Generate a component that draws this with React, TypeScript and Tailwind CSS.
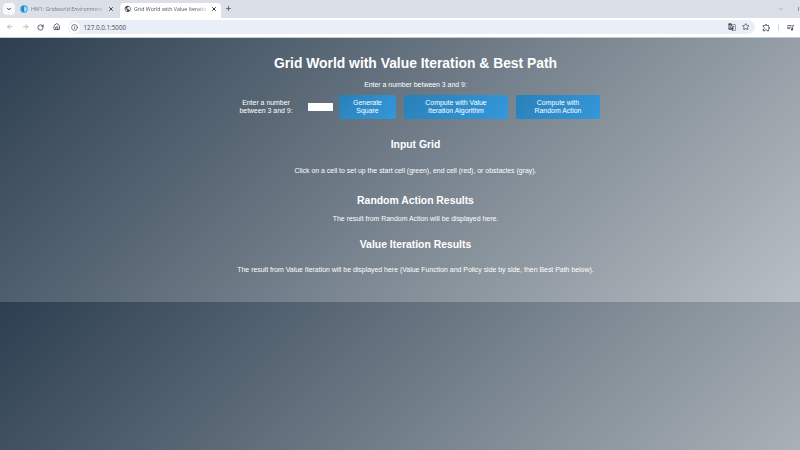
import React from "react";
import { ArrowLeft, ArrowRight, ChevronDown, House, Info, Minus, Plus, RotateCw, Star, X } from "lucide-react";
import { MdGTranslate, MdOutlineExtension, MdPublic, MdQueueMusic } from "react-icons/md";

function TabStrip() {
  return (
    <div className="flex h-[18px] items-end bg-[#dbdfe8]">
      <div className="mb-[3px] ml-[3px] flex h-[12px] w-[12px] items-center justify-center rounded-[4px] bg-[#f6f8fc]">
        <ChevronDown size={6} strokeWidth={4} color="#333" />
      </div>
      <div className="ml-[5px] flex h-[18px] w-[97px] items-center">
        <svg width="8" height="8" viewBox="0 0 8 8" className="shrink-0">
          <circle cx="4" cy="4" r="3.7" fill="#2c9ce0" />
          <path d="M4.2 1.4a2.6 2.6 0 0 1 0 5.2Z" fill="#b9e2f8" />
          <path d="M3.1 1.8v4.4" stroke="#1574b8" strokeWidth="1" />
        </svg>
        <span className="ml-[3px] w-[73px] bg-gradient-to-r from-[#6d727b] from-85% to-[#c9cdd5] bg-clip-text text-left text-[5.25px] leading-[9px] whitespace-nowrap text-transparent">
          HW1: Gridworld Environment
        </span>
        <X size={6} strokeWidth={3.8} color="#444" className="ml-[4px] shrink-0" />
      </div>
      <div className="ml-[3px] flex h-[15px] w-[101px] items-center rounded-t-[4px] bg-white pb-[3px] pl-[4px]">
        <MdPublic size={7.5} color="#41464c" className="shrink-0" />
        <span className="ml-[2.5px] w-[73px] bg-gradient-to-r from-[#44484e] from-85% to-[#d8dadd] bg-clip-text text-left text-[5.25px] leading-[9px] whitespace-nowrap text-transparent">
          Grid World with Value Iteratio
        </span>
        <X size={6} strokeWidth={3.8} color="#333" className="ml-[4px] shrink-0" />
      </div>
      <Plus size={7} strokeWidth={2.8} color="#555" className="mb-[6px] ml-[4px]" />
      <div className="ml-auto flex h-[18px] items-center pr-[1px]">
        <Minus size={6} strokeWidth={2} color="#8a8e95" className="mr-[14px]" />
        <span className="h-[4px] w-[1px] bg-[#8a8e95]" />
      </div>
    </div>
  );
}

function Toolbar() {
  return (
    <div className="flex h-[20px] items-center border-b border-[#c4c9ce] bg-white pb-px pl-[6px]">
      <ArrowLeft size={7.5} strokeWidth={2.4} color="#a3a7ac" />
      <ArrowRight size={7.5} strokeWidth={2.4} color="#a3a7ac" className="ml-[8px]" />
      <RotateCw size={7} strokeWidth={3} color="#4a4f55" className="ml-[8px]" />
      <House size={7.5} strokeWidth={2.8} color="#4a4f55" className="ml-[8.5px]" />
      <div className="ml-[8px] flex h-[14px] w-[687px] items-center rounded-full bg-[#eaeff7] px-[1px]">
        <span className="flex h-[11px] w-[11px] items-center justify-center rounded-full bg-white">
          <Info size={7} strokeWidth={2.6} color="#4a4f55" />
        </span>
        <span className="ml-[3.5px] text-[6.3px] leading-[9px] text-[#45494f]">127.0.0.1:5000</span>
        <MdGTranslate size={8} color="#46505a" className="ml-auto" />
        <Star size={7.5} strokeWidth={2.6} color="#4a4f55" className="mr-[5px] ml-[6px]" />
      </div>
      <MdOutlineExtension size={9} color="#4a4f55" className="ml-[7px]" />
      <span className="ml-[7px] h-[7px] w-[1px] bg-[#c6dcf3]" />
      <MdQueueMusic size={9} color="#4a4f55" className="ml-[7px]" />
    </div>
  );
}

const buttonClass =
  "h-[24px] rounded-[2px] bg-linear-[135deg,#2980b9,#3498db] text-center text-[6.93px] leading-[8px] text-white";

export default function App() {
  return (
    <div className="h-[450px] w-[800px] overflow-hidden">
      <header className="font-['Open_Sans','Noto_Sans',sans-serif]">
        <TabStrip />
        <Toolbar />
      </header>
      <div className="h-[412px] w-[831px] bg-linear-[135deg,#2c3e50,#bdc3c7] bg-[length:831px_264px] bg-repeat-y text-center font-['Liberation_Sans',Arial,sans-serif] text-[6.93px] leading-[8px] text-white">
        <h1 className="pt-[17px] text-[13.86px] leading-[16px] font-bold">Grid World with Value Iteration &amp; Best Path</h1>
        <p className="mt-[10px]">Enter a number between 3 and 9:</p>
        <div className="ml-[233px] mt-[6px] flex h-[24px] items-center">
          <label htmlFor="size" className="w-[66px]">
            Enter a number
            <br />
            between 3 and 9:
          </label>
          <input id="size" className="ml-[9px] h-[8px] w-[25px] bg-white text-black" />
          <button className={`${buttonClass} ml-[6px] w-[57px]`}>
            Generate
            <br />
            Square
          </button>
          <button className={`${buttonClass} ml-[8px] w-[104px]`}>
            Compute with Value
            <br />
            Iteration Algorithm
          </button>
          <button className={`${buttonClass} ml-[8px] w-[84px]`}>
            Compute with
            <br />
            Random Action
          </button>
        </div>
        <h2 className="mt-[20px] text-[10.4px] leading-[12px] font-bold">Input Grid</h2>
        <p className="mt-[16px]">Click on a cell to set up the start cell (green), end cell (red), or obstacles (gray).</p>
        <h2 className="mt-[20px] text-[10.4px] leading-[12px] font-bold">Random Action Results</h2>
        <p className="mt-[8px]">The result from Random Action will be displayed here.</p>
        <h2 className="mt-[16px] text-[10.4px] leading-[12px] font-bold">Value Iteration Results</h2>
        <p className="mt-[15px]">
          The result from Value Iteration will be displayed here (Value Function and Policy side by side, then Best Path below).
        </p>
      </div>
    </div>
  );
}
